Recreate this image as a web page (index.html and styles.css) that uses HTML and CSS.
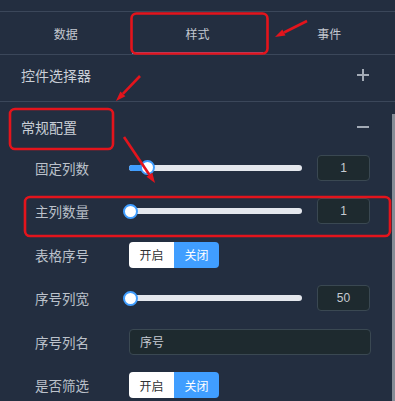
FILE: index.html
```html
<!DOCTYPE html>
<html lang="zh-CN">
<head>
<meta charset="utf-8">
<link rel="stylesheet" href="styles.css">
</head>
<body>
<div class="panel">
  <div class="topbar"></div>
  <div class="tabs">
    <div class="tab">数据</div>
    <div class="tab active">样式</div>
    <div class="tab">事件</div>
  </div>
  <div class="sec-head first">
    <span>控件选择器</span>
    <span class="icon plus"></span>
  </div>
  <div class="sec-head second">
    <span>常规配置</span>
    <span class="icon minus"></span>
  </div>
  <div class="rows">
    <div class="row">
      <div class="label">固定列数</div>
      <div class="slider"><div class="fill" style="width:18px"></div><div class="thumb" style="left:18px"></div></div>
      <div class="num">1</div>
    </div>
    <div class="row">
      <div class="label">主列数量</div>
      <div class="slider"><div class="thumb" style="left:1px"></div></div>
      <div class="num">1</div>
    </div>
    <div class="row">
      <div class="label">表格序号</div>
      <div class="toggle"><span class="on">开启</span><span class="off">关闭</span></div>
    </div>
    <div class="row">
      <div class="label">序号列宽</div>
      <div class="slider"><div class="thumb" style="left:1px"></div></div>
      <div class="num">50</div>
    </div>
    <div class="row">
      <div class="label">序号列名</div>
      <div class="text-input">序号</div>
    </div>
    <div class="row">
      <div class="label">是否筛选</div>
      <div class="toggle"><span class="on">开启</span><span class="off">关闭</span></div>
    </div>
  </div>
  <div class="scrollbar"></div>
  <svg class="notes" width="395" height="401" viewBox="0 0 395 401">
    <g fill="none" stroke="#e3141c" stroke-width="2.6">
      <rect x="131.5" y="13.5" width="136" height="40" rx="5"/>
      <rect x="10" y="109" width="103" height="40" rx="5"/>
      <rect x="25" y="197" width="365" height="39" rx="5"/>
      <line x1="307" y1="21" x2="284" y2="32.5"/>
      <line x1="140" y1="76" x2="122.9" y2="93.8"/>
      <line x1="124" y1="137" x2="149.4" y2="174.7"/>
    </g>
    <g fill="#e3141c">
      <polygon points="275,37 285.5,35.6 282.4,29.4"/>
      <polygon points="116,101 125.4,96.2 120.4,91.4"/>
      <polygon points="155,183 146.5,176.7 152.3,172.7"/>
    </g>
  </svg>
</div>
</body>
</html>
```

FILE: styles.css
```css
html, body {
  margin: 0;
  padding: 0;
}
body {
  width: 395px;
  height: 401px;
  overflow: hidden;
  background: #232e40;
  font-family: "Noto Sans CJK SC", "Noto Sans", sans-serif;
}
.panel {
  position: relative;
  width: 395px;
  height: 401px;
}
.topbar {
  height: 11px;
  border-bottom: 1px solid #3b475a;
}
.tabs {
  display: flex;
  height: 42px;
  border-bottom: 1px solid #3b475a;
}
.tab {
  flex: 1;
  display: flex;
  align-items: center;
  justify-content: center;
  font-size: 12px;
  color: #c3c8d0;
  box-sizing: border-box;
}
.tab.active {
  border-bottom: 2px solid #409eff;
  padding-top: 2px;
}
.sec-head {
  display: flex;
  align-items: center;
  justify-content: space-between;
  padding: 0 26px 0 21px;
  font-size: 14px;
  color: #c9ced6;
  box-sizing: border-box;
}
.sec-head.first {
  height: 47px;
  padding-bottom: 6px;
  border-bottom: 1px solid #3b475a;
}
.sec-head.second {
  height: 44px;
  padding-top: 6px;
}
.icon {
  position: relative;
  width: 12px;
  height: 12px;
}
.icon::before, .plus::after {
  content: "";
  position: absolute;
  left: 0;
  top: 5px;
  width: 12px;
  height: 1.5px;
  background: #a3abb6;
}
.plus::after {
  left: 5.25px;
  top: 0;
  width: 1.5px;
  height: 12px;
}
.row {
  height: 43.5px;
  display: flex;
  align-items: center;
  padding-left: 35px;
}
.label {
  width: 94px;
  font-size: 13.5px;
  color: #bcc2cb;
}
.slider {
  position: relative;
  width: 173px;
  height: 6px;
  border-radius: 3px;
  background: #e4e7ed;
  margin-right: 15px;
}
.fill {
  position: absolute;
  left: 0;
  top: 0;
  height: 6px;
  border-radius: 3px;
  background: #409eff;
}
.thumb {
  position: absolute;
  top: 3px;
  width: 11px;
  height: 11px;
  margin: -7.5px 0 0 -7.5px;
  border-radius: 50%;
  background: #fff;
  border: 2px solid #409eff;
}
.num {
  width: 51px;
  height: 24px;
  border: 1px solid #3a4852;
  border-radius: 4px;
  background: #1e2a2f;
  color: #c6cbd2;
  font-family: "Liberation Sans", sans-serif;
  font-size: 12px;
  display: flex;
  align-items: center;
  justify-content: center;
}
.toggle {
  display: flex;
  height: 26px;
  border-radius: 4px;
  overflow: hidden;
  font-size: 12px;
}
.toggle span {
  width: 45px;
  display: flex;
  align-items: center;
  justify-content: center;
}
.toggle .on {
  background: #fff;
  color: #303133;
}
.toggle .off {
  background: #409eff;
  color: #fff;
}
.text-input {
  width: 230px;
  height: 24px;
  padding-left: 10px;
  border: 1px solid #3a4852;
  border-radius: 4px;
  background: #1e2a2f;
  color: #c6cbd2;
  font-size: 12px;
  display: flex;
  align-items: center;
}
.scrollbar {
  position: absolute;
  right: 0;
  top: 114px;
  width: 3px;
  height: 287px;
  background: #858c96;
}
.notes {
  position: absolute;
  left: 0;
  top: 0;
  pointer-events: none;
}
```
